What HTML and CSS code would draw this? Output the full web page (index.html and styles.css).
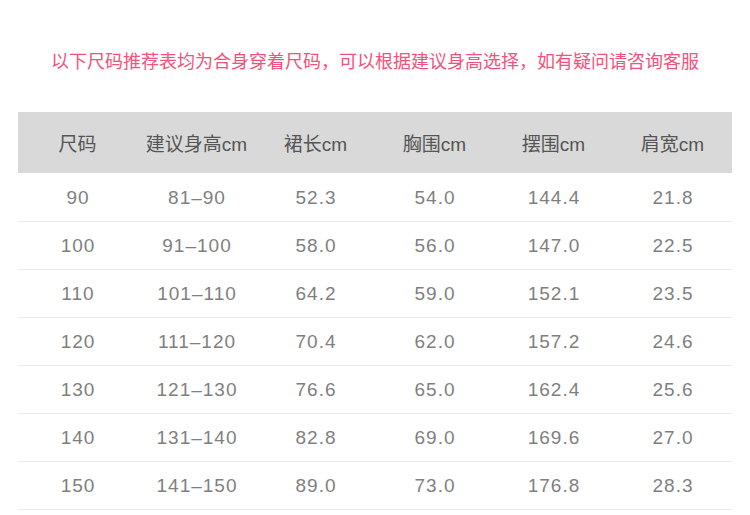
FILE: index.html
```html
<!DOCTYPE html>
<html lang="zh">
<head>
<meta charset="utf-8">
<link rel="stylesheet" href="styles.css">
</head>
<body>
<div class="page">
  <p class="note">以下尺码推荐表均为合身穿着尺码，可以根据建议身高选择，如有疑问请咨询客服</p>
  <table class="size-table">
    <thead>
      <tr><th>尺码</th><th>建议身高cm</th><th>裙长cm</th><th>胸围cm</th><th>摆围cm</th><th>肩宽cm</th></tr>
    </thead>
    <tbody>
      <tr><td>90</td><td>81–90</td><td>52.3</td><td>54.0</td><td>144.4</td><td>21.8</td></tr>
      <tr><td>100</td><td>91–100</td><td>58.0</td><td>56.0</td><td>147.0</td><td>22.5</td></tr>
      <tr><td>110</td><td>101–110</td><td>64.2</td><td>59.0</td><td>152.1</td><td>23.5</td></tr>
      <tr><td>120</td><td>111–120</td><td>70.4</td><td>62.0</td><td>157.2</td><td>24.6</td></tr>
      <tr><td>130</td><td>121–130</td><td>76.6</td><td>65.0</td><td>162.4</td><td>25.6</td></tr>
      <tr><td>140</td><td>131–140</td><td>82.8</td><td>69.0</td><td>169.6</td><td>27.0</td></tr>
      <tr><td>150</td><td>141–150</td><td>89.0</td><td>73.0</td><td>176.8</td><td>28.3</td></tr>
    </tbody>
  </table>
</div>
</body>
</html>
```
FILE: styles.css
```css
html, body {
  margin: 0;
  padding: 0;
  background: #fff;
}
.page {
  width: 750px;
  padding-top: 50px;
  font-family: "Liberation Sans", "Noto Sans CJK SC", sans-serif;
}
.note {
  margin: 0;
  height: 25px;
  line-height: 25px;
  font-size: 18px;
  color: #f5517b;
  text-align: center;
}
.size-table {
  margin: 37px 0 0 18px;
  width: 714px;
  border-collapse: collapse;
  table-layout: fixed;
}
.size-table th {
  height: 61px;
  padding: 0;
  background: #d9d9d9;
  font-weight: normal;
  font-size: 19px;
  color: #555;
  text-align: center;
  font-family: "Liberation Sans", "Noto Sans CJK SC", sans-serif;
}
.size-table th, .size-table td {
  width: 119px;
}
.size-table td {
  box-sizing: border-box;
  height: 48px;
  padding: 2px 0 0 1px;
  font-size: 19px;
  letter-spacing: 1px;
  color: #7f7f7f;
  text-align: center;
  border-bottom: 1px solid #ececec;
}
```
